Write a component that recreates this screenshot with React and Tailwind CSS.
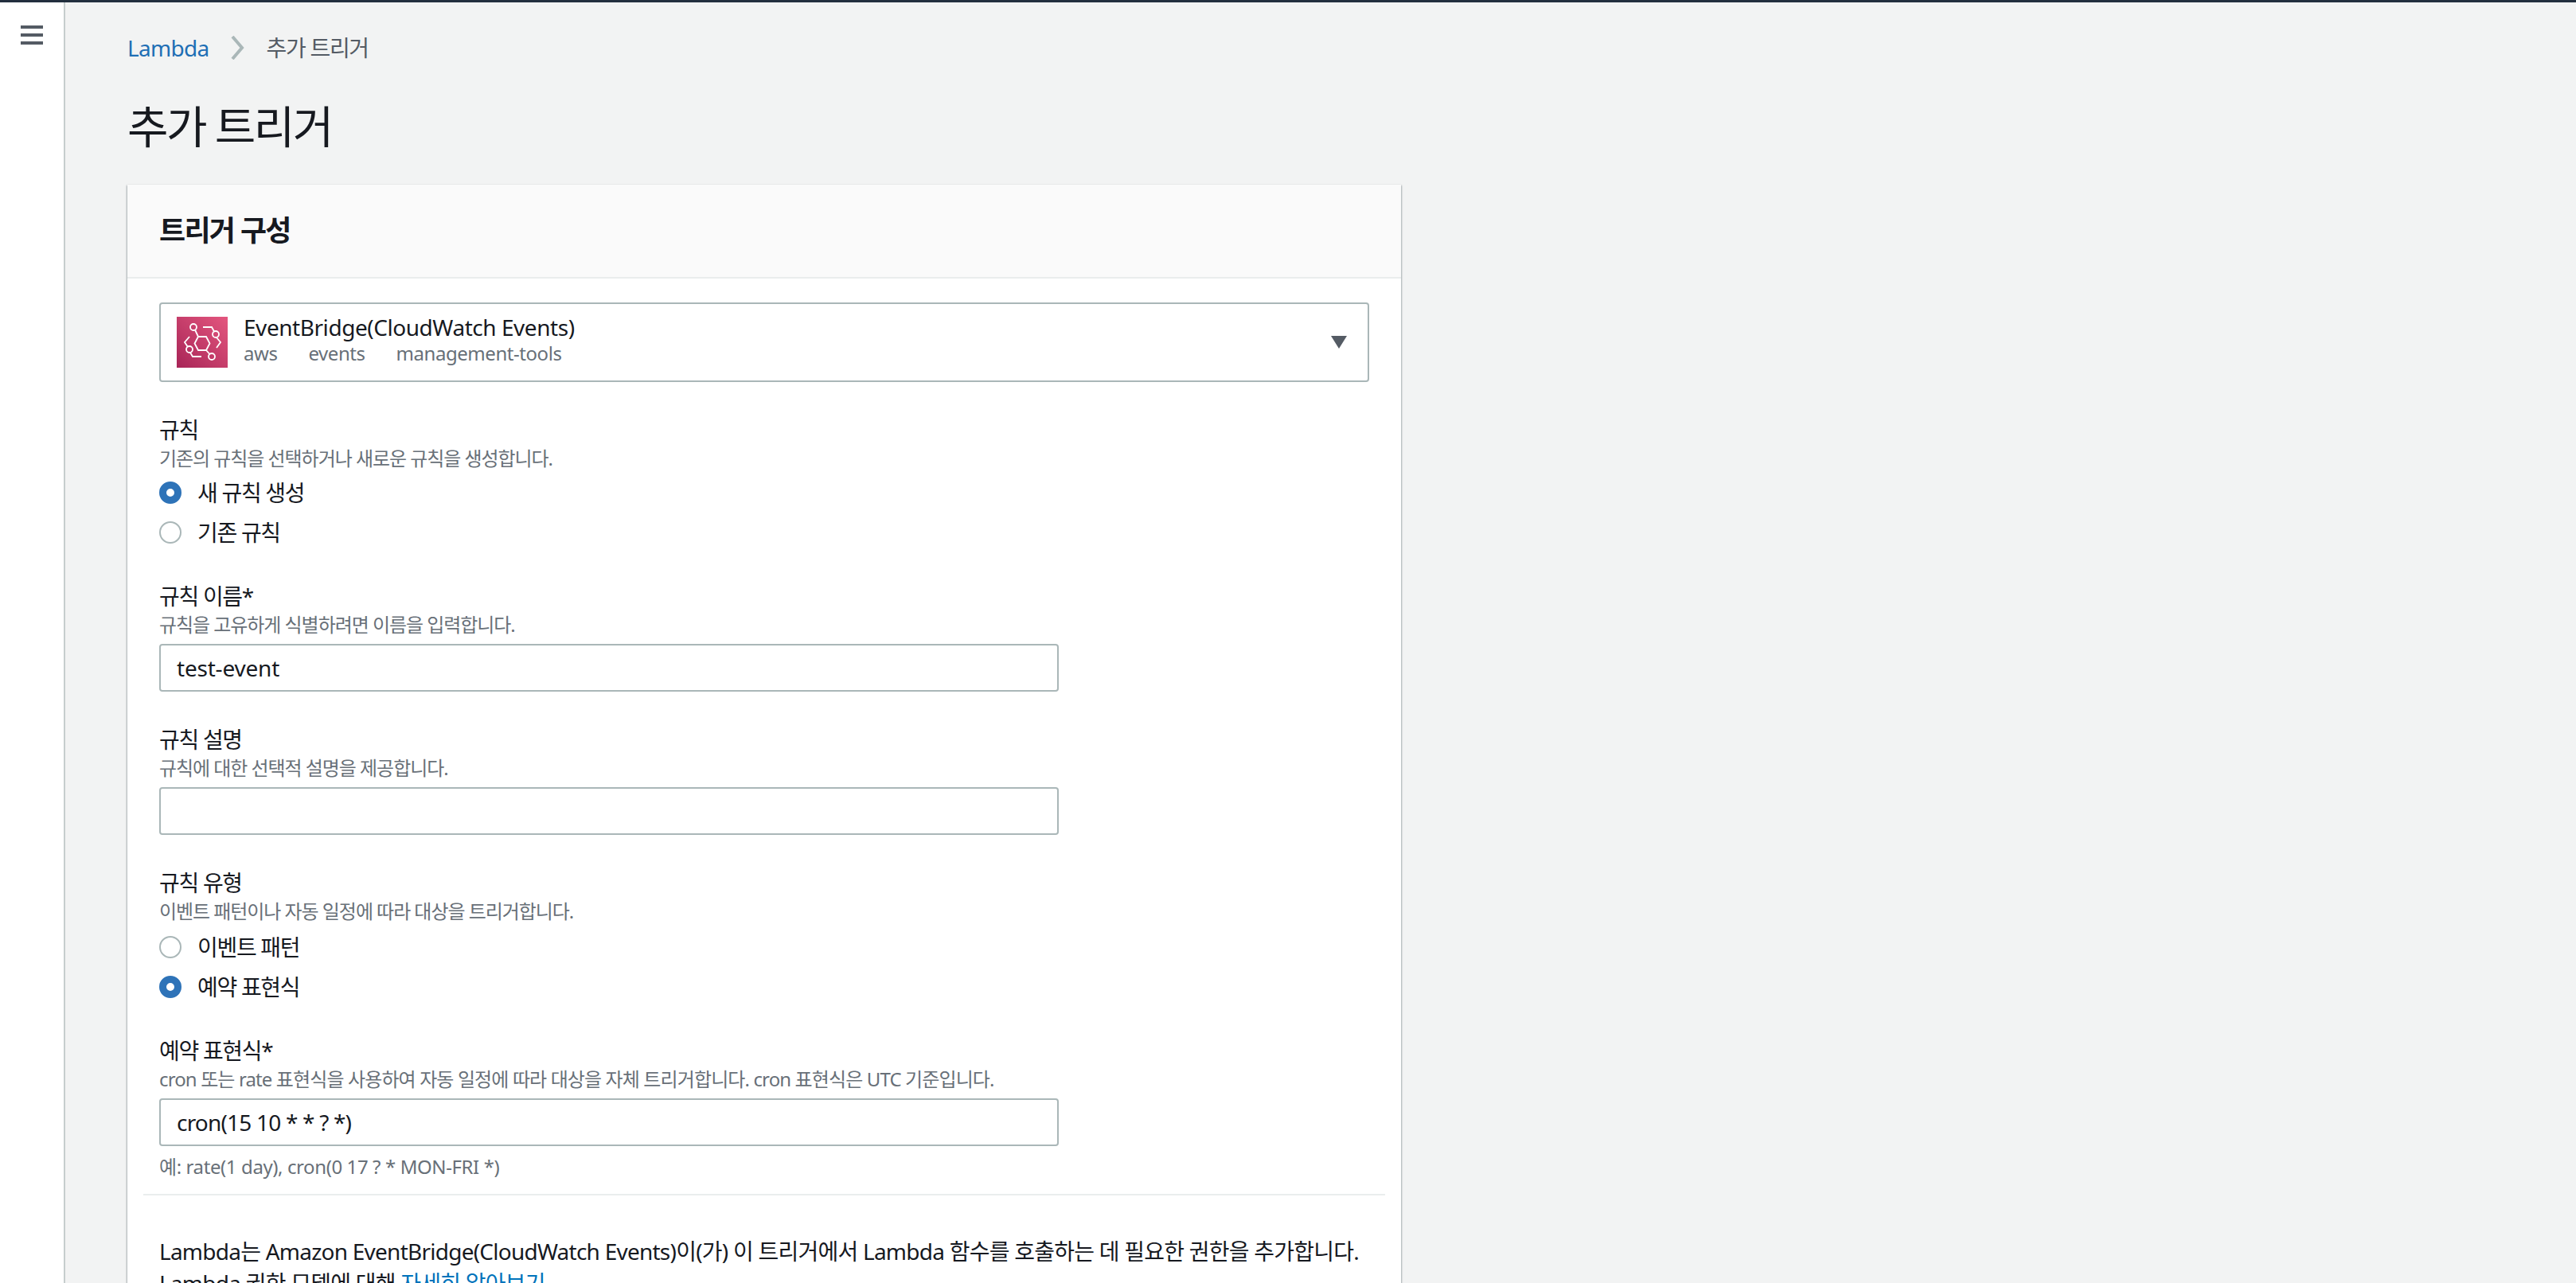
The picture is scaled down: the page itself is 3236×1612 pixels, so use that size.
const FONT = "font-['Noto_Sans','Noto_Sans_CJK_KR',sans-serif]";

const Radio = ({ checked, label }) => (
  <div className="flex items-center h-[50px]">
    {checked ? (
      <span className="w-[28px] h-[28px] rounded-full border-[9px] border-[#2e73b8] bg-white" />
    ) : (
      <span className="w-[28px] h-[28px] rounded-full border-2 border-[#aab7b8] bg-white" />
    )}
    <span className="ml-[20px] text-[28px] leading-[36px] tracking-[-1.3px] text-[#16191f]">{label}</span>
  </div>
);

const Field = ({ label, desc, value, descClass = "tracking-[-1.05px]", valueClass = "tracking-[-0.2px]" }) => (
  <div>
    <div className="text-[28px] leading-[36px] tracking-[-1.3px] text-[#16191f]">{label}</div>
    <div className={`text-[24px] leading-[36px] text-[#687078] ${descClass}`}>{desc}</div>
    <div className={`mt-[6px] w-[1130px] h-[60px] border-2 border-[#aab7b8] rounded-[4px] bg-white px-[20px] flex items-center text-[28px] text-[#16191f] ${valueClass}`}>
      {value}
    </div>
  </div>
);

const EventBridgeIcon = () => (
  <div className="w-[64px] h-[64px] bg-gradient-to-tr from-[#a82457] to-[#e4567f]">
    <svg width="64" height="64" viewBox="0 0 64 64" fill="none" stroke="white" strokeWidth="1.8">
      <path d="M27 25h10l4.500 8.500L37 42H27l-4.500-8.500z" />
      <circle cx="21" cy="13" r="4" />
      <circle cx="49" cy="22" r="4" />
      <circle cx="16" cy="41" r="4" />
      <circle cx="44" cy="50" r="4" />
      <path d="M23 16.500l4 8.500M37 42l4.500 5M33 13h11l3 5.500M50 26l5 6-5 7M16 25l-6 7 4 6M17 45l3 5h11" />
    </svg>
  </div>
);

export default function App() {
  return (
    <div className={`${FONT} h-[1612px] overflow-hidden bg-[#f2f3f3] border-t-[3px] border-[#232f3e]`}>
      <div className="flex h-full">
        {/* side nav */}
        <div className="w-[82px] shrink-0 bg-white border-r-2 border-[#c6cdcd] pt-[29px] pl-[26px]">
          <div className="w-[28px] flex flex-col gap-[6px]">
            <div className="h-[4px] bg-[#545b64]" />
            <div className="h-[4px] bg-[#545b64]" />
            <div className="h-[4px] bg-[#545b64]" />
          </div>
        </div>

        <div className="pl-[78px]">
          {/* breadcrumb */}
          <div className="h-[60px] pt-[18px] mt-[18px] flex items-center text-[28px] leading-[36px]">
            <span className="text-[#1f6fb5] tracking-[-0.7px]">Lambda</span>
            <svg className="ml-[26px] mr-[26px]" width="20" height="30" viewBox="0 0 20 30" fill="none" stroke="#aab7b8" strokeWidth="4">
              <path d="M3 1l12 14L3 29" />
            </svg>
            <span className="text-[#545b64] tracking-[-1.3px]">추가 트리거</span>
          </div>

          <h1 className="mt-[41px] text-[56px] leading-[72px] tracking-[-2.6px] text-[#16191f]">추가 트리거</h1>

          {/* card */}
          <div className="mt-[38px] w-[1600px] bg-white shadow-[0_1px_2px_rgba(0,28,36,0.3),1px_1px_2px_rgba(0,28,36,0.2),-1px_1px_2px_rgba(0,28,36,0.2)]">
            <div className="h-[118px] bg-[#fafafa] border-b-2 border-[#eaeded] px-[40px] flex items-center text-[36px] leading-[44px] font-bold tracking-[-1.7px] text-[#16191f]">
              트리거 구성
            </div>

            <div className="px-[40px] pt-[30px]">
              {/* trigger select */}
              <div className="h-[100px] w-[1520px] border-2 border-[#aab7b8] rounded-[4px] pl-[20px] pr-[26px] flex items-center">
                <EventBridgeIcon />
                <div className="ml-[20px] flex-1 pb-[7px]">
                  <div className="text-[28px] leading-[34px] tracking-[-0.45px] text-[#16191f]">EventBridge(CloudWatch Events)</div>
                  <div className="flex gap-[39px] text-[24px] leading-[32px] tracking-[-0.45px] text-[#687078]">
                    <span>aws</span>
                    <span>events</span>
                    <span>management-tools</span>
                  </div>
                </div>
                <svg width="20" height="16" viewBox="0 0 20 16" fill="#545b64">
                  <path d="M0 0h20L10 16z" />
                </svg>
              </div>

              <div className="mt-[42px] text-[28px] leading-[36px] tracking-[-1.3px] text-[#16191f]">규칙</div>
              <div className="text-[24px] leading-[36px] tracking-[-1.05px] text-[#687078]">기존의 규칙을 선택하거나 새로운 규칙을 생성합니다.</div>
              <Radio checked label="새 규칙 생성" />
              <Radio label="기존 규칙" />

              <div className="mt-[37px]">
                <Field label="규칙 이름*" desc="규칙을 고유하게 식별하려면 이름을 입력합니다." value="test-event" />
              </div>
              <div className="mt-[42px]">
                <Field label="규칙 설명" desc="규칙에 대한 선택적 설명을 제공합니다." value="" />
              </div>

              <div className="mt-[42px] text-[28px] leading-[36px] tracking-[-1.3px] text-[#16191f]">규칙 유형</div>
              <div className="text-[24px] leading-[36px] tracking-[-1.05px] text-[#687078]">이벤트 패턴이나 자동 일정에 따라 대상을 트리거합니다.</div>
              <div className="mt-[2px]">
                <Radio label="이벤트 패턴" />
                <Radio checked label="예약 표현식" />
              </div>

              <div className="mt-[37px]">
                <Field
                  label="예약 표현식*"
                  desc="cron 또는 rate 표현식을 사용하여 자동 일정에 따라 대상을 자체 트리거합니다. cron 표현식은 UTC 기준입니다."
                  descClass="tracking-[-0.88px]"
                  valueClass="tracking-[-0.8px]"
                  value="cron(15 10 * * ? *)"
                />
              </div>
              <div className="mt-[8px] text-[24px] leading-[36px] tracking-[-0.4px] text-[#687078]">예: rate(1 day), cron(0 17 ? * MON-FRI *)</div>
            </div>

            <div className="mx-[20px] mt-[16px] border-t-2 border-[#eaeded]" />

            <div className="px-[40px] pt-[50px] text-[28px] leading-[40px] tracking-[-0.76px] whitespace-nowrap text-[#16191f]">
              Lambda는 Amazon EventBridge(CloudWatch Events)이(가) 이 트리거에서 Lambda 함수를 호출하는 데 필요한 권한을 추가합니다.
              <br />
              Lambda 권한 모델에 대해 <span className="text-[#0073bb]">자세히 알아보기</span>
            </div>
          </div>
        </div>
      </div>
    </div>
  );
}
